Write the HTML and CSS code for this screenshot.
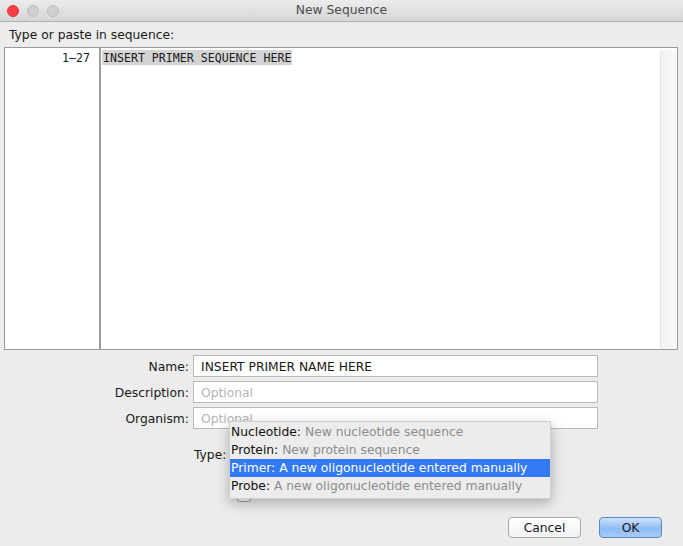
FILE: index.html
```html
<!DOCTYPE html>
<html>
<head>
<meta charset="utf-8">
<link rel="stylesheet" href="styles.css">
</head>
<body>
<div class="window">
  <div class="titlebar">
    <div class="lights">
      <span class="light red"></span>
      <span class="light"></span>
      <span class="light"></span>
    </div>
    <div class="title">New Sequence</div>
  </div>
  <div class="prompt">Type or paste in sequence:</div>
  <div class="seqbox">
    <div class="gutter">1–27</div>
    <div class="editor"><span class="sel">INSERT PRIMER SEQUENCE HERE</span></div>
    <div class="scrollbar"></div>
  </div>
  <div class="form">
    <label class="lbl">Name:</label>
    <div class="field">INSERT PRIMER NAME HERE</div>
    <label class="lbl">Description:</label>
    <div class="field ph">Optional</div>
    <label class="lbl">Organism:</label>
    <div class="field ph">Optional</div>
    <div></div>
    <div class="type-cell">
      <label class="type-lbl">Type:</label>
      <div class="checkrow"><span class="check"></span></div>
    </div>
  </div>
  <div class="popup">
    <div class="item"><b>Nucleotide:</b> <span class="desc">New nucleotide sequence</span></div>
    <div class="item"><b>Protein:</b> <span class="desc">New protein sequence</span></div>
    <div class="item active"><b>Primer:</b> <span class="desc">A new oligonucleotide entered manually</span></div>
    <div class="item"><b>Probe:</b> <span class="desc">A new oligonucleotide entered manually</span></div>
  </div>
  <div class="buttons">
    <button class="btn">Cancel</button>
    <button class="btn ok">OK</button>
  </div>
</div>
</body>
</html>
```

FILE: styles.css
```css
* { box-sizing: border-box; }
html, body {
  margin: 0;
  padding: 0;
  width: 683px;
  height: 546px;
  overflow: hidden;
  background: #ececec;
  font-family: "DejaVu Sans", Verdana, sans-serif;
  font-size: 12.3px;
  color: #1a1a1a;
}
.window {
  position: relative;
  width: 683px;
  height: 546px;
}
.titlebar {
  height: 22px;
  background: linear-gradient(#ececec, #d6d6d6);
  border-bottom: 1px solid #b1b1b1;
  display: flex;
  align-items: center;
  position: relative;
}
.lights {
  display: flex;
  gap: 8px;
  padding-left: 7px;
}
.light {
  width: 12px;
  height: 12px;
  border-radius: 50%;
  background: #cfcfcf;
  border: 1px solid #bdbdbd;
}
.light.red {
  background: #fc3d42;
  border-color: #e0363a;
}
.title {
  position: absolute;
  left: 0;
  right: 0;
  top: 3px;
  text-align: center;
  color: #4c4c4c;
  font-size: 12.3px;
}
.prompt {
  padding: 6px 0 0 9px;
  height: 25px;
}
.seqbox {
  margin: 0 5px 0 4px;
  height: 303px;
  border: 1px solid #9a9a9a;
  background: #fff;
  display: flex;
}
.gutter {
  width: 96px;
  border-right: 2px solid #9c9c9c;
  text-align: right;
  padding: 3px 9px 0 0;
  font-family: "DejaVu Sans Mono", monospace;
  font-size: 11.6px;
  line-height: 15px;
}
.editor {
  flex: 1;
  padding: 3px 0 0 1px;
  font-family: "DejaVu Sans Mono", monospace;
  font-size: 11.6px;
  line-height: 15px;
}
.sel {
  background: #d4d4d4;
  padding: 1px 1px 0 1px;
}
.scrollbar {
  width: 16px;
  margin: 2px 1px 0 0;
  background: linear-gradient(90deg, #f3f3f3, #f8f8f8);
  border-left: 1px solid #e4e4e4;
}
.form {
  display: grid;
  grid-template-columns: 189px 405px;
  column-gap: 4px;
  row-gap: 4px;
  padding-top: 5px;
}
.lbl {
  text-align: right;
  align-self: center;
  padding-top: 2px;
  color: #1a1a1a;
}
.field {
  height: 22px;
  border: 1px solid #b9b9b9;
  background: #fff;
  padding: 4px 0 0 7px;
  color: #1a1a1a;
}
.field.ph {
  color: #b5b5b5;
}
.type-cell {
  height: 70px;
  position: relative;
}
.type-lbl {
  position: absolute;
  left: 1px;
  top: 15px;
}
.checkrow {
  position: absolute;
  left: 44px;
  top: 55px;
  display: flex;
  align-items: center;
}
.check {
  width: 14px;
  height: 14px;
  border: 1px solid #9a9a9a;
  border-radius: 3px;
  background: #fff;
}
.popup {
  position: absolute;
  left: 229px;
  top: 421px;
  width: 322px;
  padding: 1px 0 3px;
  background: #ececec;
  border: 1px solid #cfcfcf;
  box-shadow: 0 4px 12px rgba(0,0,0,0.28);
  z-index: 2;
}
.item {
  height: 18px;
  line-height: 18px;
  padding-left: 1px;
  white-space: nowrap;
  color: #111;
}
.item b { font-weight: normal; }
.item .desc { color: #8c8c8c; }
.item.active {
  background: #3479f5;
  color: #fff;
}
.item.active .desc { color: #fff; }
.buttons {
  position: absolute;
  right: 21px;
  top: 517px;
  display: flex;
  gap: 18px;
}
.btn {
  height: 21px;
  font-family: "DejaVu Sans", Verdana, sans-serif;
  font-size: 12.3px;
  color: #1a1a1a;
  border: 1px solid #a9a9a9;
  border-radius: 4px;
  background: linear-gradient(#ffffff, #f1f1f1);
  padding: 0;
  width: 73px;
}
.btn.ok {
  width: 63px;
  border-color: #5b87c9;
  background: linear-gradient(#cfe2fb, #8fbcf3 55%, #a6cbf7);
}
```
